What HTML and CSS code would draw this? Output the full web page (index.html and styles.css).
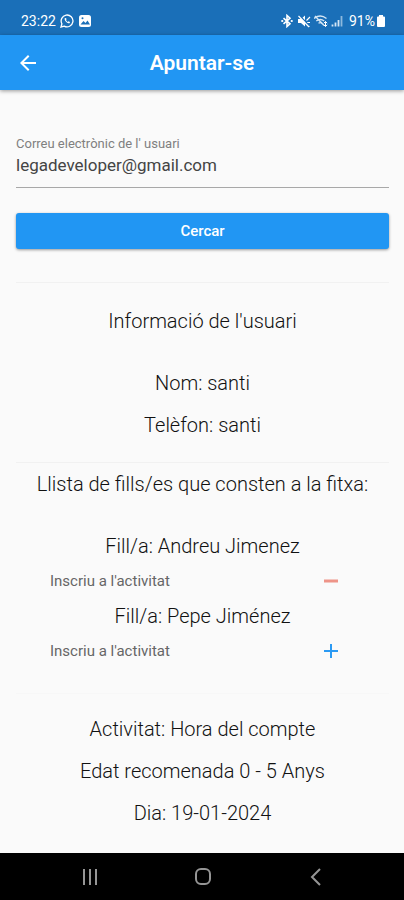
FILE: index.html
```
<!DOCTYPE html>
<html lang="ca">
<head>
  <meta charset="UTF-8">
  <meta name="viewport" content="width=device-width, initial-scale=1.0">
  <title>Apuntar-se</title>
  <link rel="stylesheet" href="styles.css">
</head>
<body>
  <!-- Barra d'estat -->
  <div class="status">
    <span>23:22</span>
    <svg class="status-icon" viewBox="0 0 14 14" fill="none" stroke="#fff">
      <path d="M1 13l.9-3.2A5.9 5.9 0 1 1 4.2 12.100z" stroke-width="1.300"/>
      <path d="M4.700 4.200c-.6 2.200 2.500 5.500 4.900 5l.4-1.200-1.500-.7-.8.6c-.9-.5-1.400-1.100-1.700-1.900l.6-.7-.6-1.400z" fill="#fff" stroke="none"/>
    </svg>
    <svg class="status-icon" viewBox="0 0 14 14">
      <rect x="1" y="1" width="12" height="12" rx="2.500" fill="#fff"/>
      <path d="M2.500 10.500l3-3.500 2 2 2-2.500 2.500 4z" fill="#1a6fb8"/>
      <circle cx="4.500" cy="4.300" r="1" fill="#1a6fb8"/>
    </svg>
    <div class="status-right">
      <svg class="status-icon" viewBox="0 0 14 14" fill="none" stroke="#fff" stroke-width="1.600">
        <path d="M3.500 4.200l6.500 5.600L7 12.500v-11l3 2.700-6.500 5.600"/>
        <path d="M2.200 7h.1M11.700 7h.1" stroke-width="2.200" stroke-linecap="round"/>
      </svg>
      <svg class="status-icon" viewBox="0 0 14 14">
        <path d="M1 5h3l4-3.500v11L4 9H1z" fill="#fff"/>
        <path d="M9.500 6.500L13 3M10 8.500h3M9.500 10l3 2.500" fill="none" stroke="#fff" stroke-width="1.200"/>
        <path d="M2.500 1.500l10 10.500" stroke="#1a6fb8" stroke-width="1.500"/>
        <path d="M1.500 2l10.500 11" stroke="#fff" stroke-width="1.200"/>
      </svg>
      <svg class="status-icon" viewBox="0 0 14 14" fill="none" stroke="#d4e5f4" stroke-width="1.400">
        <path d="M0 4.500c4-3.300 8.500-3.300 12.500 0M2.300 7c2.600-2 5.300-2 7.900 0M4.500 9.300c1.200-.9 2.400-.9 3.600 0"/>
        <path d="M1 2l9 9.500"/>
        <path d="M11.500 7.500v5M9.800 9.200l1.700-1.700 1.700 1.700M9.800 10.800l1.700 1.700 1.700-1.700" stroke="#fff" stroke-width="1"/>
      </svg>
      <svg class="status-icon" viewBox="0 0 14 14">
        <path d="M1.500 10.500v2M4.500 8.500v4M7.500 6v6.500" stroke="#d4e5f4" stroke-width="1.800"/>
        <path d="M10.500 2v10.500" stroke="#8db8dd" stroke-width="1.800"/>
      </svg>
      <span class="battery-text">91%</span>
      <svg class="battery" viewBox="0 0 10 14">
        <path d="M3 1h4v1.500h1a1 1 0 0 1 1 1V12a1 1 0 0 1-1 1H2a1 1 0 0 1-1-1V3.500a1 1 0 0 1 1-1h1z" fill="#fff"/>
      </svg>
    </div>
  </div>

  <header class="app-bar">
    <button class="icon-btn" type="button" aria-label="Enrere">
      <svg width="24" height="24" viewBox="0 0 24 24" fill="#fff">
        <path d="M20 11H7.830l5.590-5.590L12 4l-8 8 8 8 1.410-1.410L7.830 13H20z"/>
      </svg>
    </button>
    <h1>Apuntar-se</h1>
  </header>

  <main>
    <form class="search">
      <label for="email">Correu electrònic de l' usuari</label>
      <input id="email" type="email" value="legadeveloper@gmail.com">
      <button class="search-btn" type="button">Cercar</button>
    </form>

    <!-- Dades de l'usuari -->
    <section class="user">
      <h2>Informació de l'usuari</h2>
      <p>Nom: santi</p>
      <p>Telèfon: santi</p>
    </section>

    <!-- Fills i inscripcions -->
    <section class="children">
      <h2>Llista de fills/es que consten a la fitxa:</h2>
      <p>Fill/a: Andreu Jimenez</p>
      <div class="enroll">
        <span id="fill1">Inscriu a l'activitat</span>
        <button class="icon-btn" type="button" aria-labelledby="fill1">
          <svg width="24" height="24" viewBox="0 0 24 24"><path d="M5 12h14" stroke="#ee9488" stroke-width="3"/></svg>
        </button>
      </div>
      <p>Fill/a: Pepe Jiménez</p>
      <div class="enroll">
        <span id="fill2">Inscriu a l'activitat</span>
        <button class="icon-btn" type="button" aria-labelledby="fill2">
          <svg width="24" height="24" viewBox="0 0 24 24"><path d="M5 12h14M12 5v14" stroke="#2b9af3" stroke-width="2"/></svg>
        </button>
      </div>
    </section>

    <section class="activity">
      <p>Activitat: Hora del compte</p>
      <p>Edat recomenada 0 - 5 Anys</p>
      <p>Dia: 19-01-2024</p>
    </section>
  </main>

  <nav class="nav-bar">
    <button class="icon-btn" type="button" aria-label="Recents">
      <svg width="20" height="20" viewBox="0 0 20 20" stroke="#959595" stroke-width="2"><path d="M4 2v16M10 2v16M16 2v16"/></svg>
    </button>
    <button class="icon-btn" type="button" aria-label="Inici">
      <svg width="20" height="20" viewBox="0 0 20 20" fill="none" stroke="#959595" stroke-width="2"><rect x="3" y="2" width="14" height="15" rx="5"/></svg>
    </button>
    <button class="icon-btn" type="button" aria-label="Torna">
      <svg width="20" height="20" viewBox="0 0 20 20" fill="none" stroke="#959595" stroke-width="2"><path d="M14 2l-8 8 8 8"/></svg>
    </button>
  </nav>
</body>
</html>
```
FILE: styles.css
```
* {
  box-sizing: border-box;
}

body {
  margin: 0;
  min-height: 100vh;
  display: flex;
  flex-direction: column;
  background-color: #fafafa;
  color: #111;
  font-family: Roboto, "Liberation Sans", sans-serif;
}

h1, h2, p {
  margin: 0;
}

.status {
  display: flex;
  align-items: center;
  gap: 4px;
  height: 35px;
  padding: 6px 18px 0 21px;
  background-color: #1a6fb8;
  color: #fff;
  font-size: 14px;
}

.status-icon {
  width: 14px;
  height: 14px;
}

.status-right {
  display: flex;
  align-items: center;
  gap: 3px;
  margin-left: auto;
}

.battery {
  width: 10px;
  height: 14px;
  margin-left: -2px;
}

.battery-text {
  margin-left: 1px;
}

.app-bar {
  display: grid;
  grid-template-columns: 24px 1fr 24px;
  align-items: center;
  height: 55px;
  padding: 0 16px;
  background-color: #2196f3;
  color: #fff;
  box-shadow: 0 1px 4px rgba(0, 0, 0, 0.4);
}

.app-bar h1 {
  font-size: 21px;
  font-weight: 600;
  text-align: center;
}

.icon-btn {
  display: flex;
  padding: 0;
  border: none;
  background: none;
  cursor: pointer;
}

main {
  flex: 1;
  padding: 46px 15px 18px 16px;
}

.search {
  display: flex;
  flex-direction: column;
  padding-bottom: 33px;
}

.search label {
  color: #808080;
  font-size: 13px;
  line-height: 16px;
}

.search input {
  width: 100%;
  height: 36px;
  padding: 0 0 10px;
  border: none;
  border-bottom: 1px solid #a8a8a8;
  outline: none;
  background: none;
  color: #444;
  font-family: inherit;
  font-size: 17px;
}

.search-btn {
  height: 36px;
  margin-top: 25px;
  border: none;
  border-radius: 3px;
  background-color: #2196f3;
  color: #fff;
  box-shadow: 0 1px 3px rgba(0, 0, 0, 0.4);
  font-family: inherit;
  font-size: 15px;
  font-weight: 500;
  cursor: pointer;
}

section {
  border-top: 1px solid #f1f1f1;
  text-align: center;
}

section h2,
section p {
  padding: 10px 0;
  font-size: 20px;
  font-weight: 300;
  line-height: 22px;
}

section h2 {
  margin-bottom: 20px;
}

.user {
  padding: 17px 0 16px;
}

.children {
  padding-bottom: 28px;
}

.enroll {
  display: flex;
  align-items: center;
  justify-content: space-between;
  height: 28px;
  padding: 0 46px 0 34px;
  color: #666;
  font-size: 15px;
}

.activity {
  padding-top: 14px;
  border-color: #f7f7f7;
}

.nav-bar {
  display: flex;
  align-items: center;
  justify-content: space-around;
  height: 47px;
  padding: 0 32px 0 34px;
  background-color: #000;
}
```
